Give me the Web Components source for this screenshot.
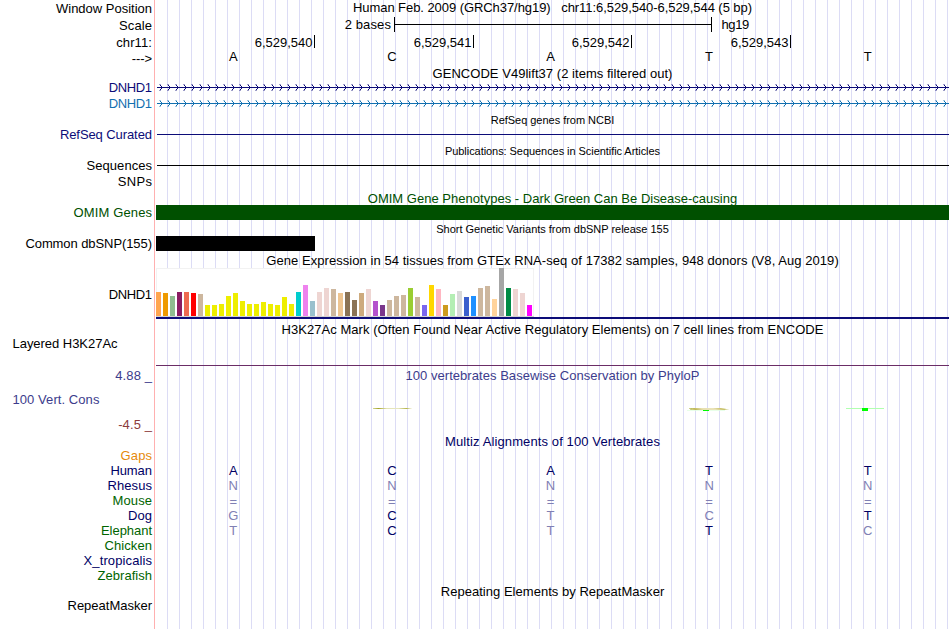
<!DOCTYPE html>
<html lang="en">
<head>
<meta charset="utf-8">
<title>Genome browser tracks</title>
<style>
body { margin: 0; background: #fff; }
</style>
</head>
<body>
<genome-view></genome-view>
<script>
/* Text run whose advance is spread to the given width. */
class FitText extends HTMLElement {
  connectedCallback() {
    const s = this.attachShadow({ mode: 'open' });
    s.innerHTML = '<style>:host{display:block;white-space:pre;line-height:15px}span{display:inline-block}</style><span><slot></slot></span>';
    const w = +this.getAttribute('w');
    if (w) {
      const span = s.querySelector('span');
      const d = (w - span.getBoundingClientRect().width) / this.textContent.length;
      span.style.letterSpacing = d.toFixed(3) + 'px';
      span.style.marginRight = (-d).toFixed(3) + 'px';
    }
  }
}
customElements.define('fit-text', FitText);

/* One browser row: label column on the left, data area on the right. */
class TrackRow extends HTMLElement {
  connectedCallback() {
    const s = this.attachShadow({ mode: 'open' });
    const a = n => this.getAttribute(n);
    s.innerHTML = `<style>
      :host{display:grid;grid-template-columns:152px 793px;column-gap:4px;height:${a('h')}px;color:${a('c') || '#000'}}
      .l{display:flex;justify-content:${a('left') ? 'flex-start' : 'flex-end'};padding:${a('lt') || 0}px 0 0 ${a('left') || 0}px;min-width:0;height:0}
      .t{display:flex;justify-content:center;padding-top:${a('tt') || 0}px;height:0;font-size:${a('fs') || 13}px}
      .d{min-width:0;height:${a('h')}px}
    </style>
    <div class="l">${a('label') ? '' : '<slot name="label"></slot>'}</div>
    <div class="d">${a('t') ? '<div class="t"></div>' : ''}<slot></slot></div>`;
    const put = (sel, text, w) => {
      if (!text) return;
      const el = document.createElement('fit-text');
      el.setAttribute('w', w);
      el.textContent = text;
      s.querySelector(sel).append(el);
    };
    put('.l', a('label'), a('lw'));
    put('.t', a('t'), a('tw'));
  }
}
customElements.define('track-row', TrackRow);

/* Five bases in equal columns; a dash after a letter dims it. */
class BaseCells extends HTMLElement {
  connectedCallback() {
    const s = this.attachShadow({ mode: 'open' });
    s.innerHTML = `<style>:host{display:grid;grid-template-columns:repeat(5,158.6px);margin-left:-2px;text-align:center;line-height:15px}
      .dim{color:#8080b4}.eq{padding-top:1px}</style>` + this.getAttribute('v').split(' ').map(v =>
      `<span class="${v[1] ? 'dim' : ''} ${v[0] === '=' ? 'eq' : ''}">${v[0]}</span>`).join('');
  }
}
customElements.define('base-cells', BaseCells);

/* Ruler line with a tick at both ends. */
class ScaleBar extends HTMLElement {
  connectedCallback() {
    this.attachShadow({ mode: 'open' }).innerHTML = `<style>
      :host{display:grid;grid-template-columns:235px 321px 1fr}
      .a{display:flex;justify-content:flex-end}
      .a,.b{height:15px}.b{padding-left:9.5px}
      svg{display:block;margin-left:3px}</style>
      <div class="a"><fit-text w="46.5">2 bases</fit-text></div>
      <svg width="318" height="15" shape-rendering="crispEdges"><path d="M0 0h1v15h-1zM317 0h1v15h-1zM0 7h318v1H0z"/></svg>
      <div class="b"><fit-text w="27.5">hg19</fit-text></div>`;
  }
}
customElements.define('scale-bar', ScaleBar);

class CoordTicks extends HTMLElement {
  connectedCallback() {
    this.attachShadow({ mode: 'open' }).innerHTML = `<style>
      :host{display:grid;grid-template-columns:159px 159px 158px 159px}
      div{display:flex;justify-content:flex-end;gap:1.5px;padding-top:1px}
      i{width:1px;height:13px;background:#000}</style>` +
      [0, 1, 2, 3].map(n => `<div><fit-text w="57.7">6,529,54${n}</fit-text><i></i></div>`).join('');
  }
}
customElements.define('coord-ticks', CoordTicks);

/* Intron line with strand arrows. */
class GeneLine extends HTMLElement {
  connectedCallback() {
    const n = [], f = [];
    for (let x = 5; x < 792; x += 8) {
      n.push(`M${x - 1} 5h1v1h-1zM${x} 6h1v1h-1zM${x + 1} 7h1v1h-1zM${x} 8h1v1h-1zM${x - 1} 9h1v1h-1z`);
      f.push(`M${x - 2} 4h1v1h-1zM${x - 2} 10h1v1h-1zM${x - 1} 4h1v1h-1zM${x - 1} 10h1v1h-1z`);
    }
    this.attachShadow({ mode: 'open' }).innerHTML = `<style>:host{display:block}svg{display:block}</style>
      <svg width="793" height="16" shape-rendering="crispEdges" fill="currentColor"><path d="M1 7h792v1H1z"/><path d="${n.join('')}"/><path opacity=".4" d="${f.join('')}"/></svg>`;
  }
}
customElements.define('gene-line', GeneLine);

/* Solid block: x, y, w, h inside the data area. */
class DataBlock extends HTMLElement {
  connectedCallback() {
    const a = n => this.getAttribute(n) || 0;
    this.attachShadow({ mode: 'open' }).innerHTML = `<style>:host{display:block;padding:${a('y')}px 0 0 ${a('x')}px}
      div{width:${a('w')}px;height:${a('h')}px;background:${a('c')}}</style><div></div>`;
  }
}
customElements.define('data-block', DataBlock);

/* Tissue expression bars, 5px wide on a 7px pitch. */
class TissueBars extends HTMLElement {
  connectedCallback() {
    const v = [
      [24,'#ffa54f'],[23,'#ee9a00'],[20,'#8fbc8f'],[24,'#8b1c62'],[24,'#ee6a50'],[23,'#ff0000'],[22,'#cdb79e'],
      [11,'#eeee00'],[11,'#eeee00'],[12,'#eeee00'],[20,'#eeee00'],[23,'#eeee00'],[15,'#eeee00'],[12,'#eeee00'],[12,'#eeee00'],[14,'#eeee00'],[12,'#eeee00'],[11,'#eeee00'],[19,'#eeee00'],[12,'#eeee00'],
      [24,'#00cdcd'],[31,'#ee82ee'],[15,'#9ac0cd'],[24,'#eed5d2'],[28,'#eed5d2'],[27,'#cdb79e'],[23,'#eec591'],[24,'#8b7355'],[16,'#8b7355'],[23,'#cdaa7d'],[27,'#eed5d2'],
      [15,'#b452cd'],[11,'#7a378b'],[16,'#cdb79e'],[20,'#cdb79e'],[21,'#cdb79e'],[28,'#9acd32'],[19,'#cdb79e'],[11,'#7a67ee'],[31,'#ffd700'],[27,'#ffb6c1'],[11,'#cd9b1d'],[22,'#b4eeb4'],[25,'#d9d9d9'],
      [19,'#3a5fcd'],[20,'#1e90ff'],[28,'#cdb79e'],[30,'#cdb79e'],[17,'#ffd39b'],[48,'#a6a6a6'],[28,'#008b45'],[27,'#eed5d2'],[23,'#eed5d2'],[11,'#ff00ff']];
    this.attachShadow({ mode: 'open' }).innerHTML = `<style>
      :host{display:block}
      .p{box-sizing:border-box;width:378px;height:49px;background:linear-gradient(#f2f2f2,#f2f2f2) 0 0/100% 1px no-repeat,linear-gradient(#f2f2f2,#f2f2f2) 0 0/1px 100% no-repeat,linear-gradient(#f2f2f2,#f2f2f2) 100% 0/1px 100% no-repeat,#fff;border-bottom:1px solid #d2d2d2;display:flex;gap:2px;align-items:flex-end}
      i{width:5px;flex:none}
      .n{height:2px;background:#0c0c78}</style>
      <div class="p">${v.map(([h, c]) => `<i style="height:${h}px;background:${c}"></i>`).join('')}</div><div class="n"></div>`;
  }
}
customElements.define('tissue-bars', TissueBars);

/* Conservation scores: faint squashed letters around the zero line. */
class PhyloWiggle extends HTMLElement {
  connectedCallback() {
    this.attachShadow({ mode: 'open' }).innerHTML = `<style>:host{display:block}svg{display:block}</style>
    <svg width="793" height="68"><defs>
      <linearGradient id="o"><stop offset="0" stop-color="#a5ad2c" stop-opacity=".5"/><stop offset=".14" stop-color="#a5a52c"/><stop offset=".35" stop-color="#e3e3b4"/><stop offset=".65" stop-color="#e6e6c0"/><stop offset=".86" stop-color="#b5b54c"/><stop offset="1" stop-color="#c5c56c" stop-opacity=".1"/></linearGradient></defs>
      <g transform="translate(0 0)">
      <rect x="217" y="42" width="39" height="1" fill="url(#o)"/>
      <rect x="533" y="42" width="37" height="1" fill="url(#o)"/>
      <rect x="534" y="43" width="39" height="1" fill="url(#o)"/>
      <rect x="536" y="42" width="32" height="2" fill="#f1ddb0" opacity=".35"/>
      <rect x="531" y="44" width="38" height="1" fill="#dfffdf" opacity=".7"/>
      <rect x="547" y="44" width="6" height="1" fill="#00f800"/>
      <rect x="690" y="42" width="38" height="1" fill="#b0ffb0"/>
      <rect x="706" y="42" width="6" height="3" fill="#00ff00"/></g></svg>`;
  }
}
customElements.define('phylo-wiggle', PhyloWiggle);

class GenomeView extends HTMLElement {
  connectedCallback() {
    this.attachShadow({ mode: 'open' }).innerHTML = `<style>
      :host{display:block;width:950px;height:629px;overflow:hidden;font:13px "Liberation Sans",Arial,sans-serif;color:#000;
        background:linear-gradient(#ffb0b0,#ffb0b0) 154px 0/1px 100% no-repeat,
        repeating-linear-gradient(90deg,#dcdcf5 0 1px,transparent 1px 12px) 167px 0/783px 100% no-repeat,#fff}
      .v{width:152px}
      .v div{display:flex;justify-content:flex-end}
      phylo-wiggle{margin-top:-1px}
    </style>
    <track-row h="17" label="Window Position" lw="96" lt="1" t="Human Feb. 2009 (GRCh37/hg19)   chr11:6,529,540-6,529,544 (5 bp)" tw="399"></track-row>
    <track-row h="17" label="Scale" lw="33" lt="1"><scale-bar></scale-bar></track-row>
    <track-row h="15" label="chr11:" lw="36" lt="1"><coord-ticks></coord-ticks></track-row>
    <track-row h="17" label="--->" lw="20" lt="2"><base-cells v="A C A T T"></base-cells></track-row>
    <track-row h="14" t="GENCODE V49lift37 (2 items filtered out)" tw="240"></track-row>
    <track-row h="16" label="DNHD1" lw="43" c="#0c0c78"><gene-line></gene-line></track-row>
    <track-row h="16" label="DNHD1" lw="43" c="#1270b0"><gene-line></gene-line></track-row>
    <track-row h="15" t="RefSeq genes from NCBI" tw="123.5" tt="1" fs="11"></track-row>
    <track-row h="16" label="RefSeq Curated" lw="92" c="#0c0c78"><data-block x="1" y="7" w="792" h="1" c="#0c0c78"></data-block></track-row>
    <track-row h="15" t="Publications: Sequences in Scientific Articles" tw="215" tt="1" fs="11"></track-row>
    <track-row h="16" label="Sequences" lw="65.5"><data-block x="1" y="7" w="792" h="1" c="#000"></data-block></track-row>
    <track-row h="16" label="SNPs" lw="34.5"></track-row>
    <track-row h="15" t="OMIM Gene Phenotypes - Dark Green Can Be Disease-causing" tw="369.5" tt="1" c="#005000"></track-row>
    <track-row h="15" label="OMIM Genes" lw="78.5" c="#005000"><data-block w="793" h="15" c="#005000" style="position:relative"></data-block></track-row>
    <track-row h="16" t="Short Genetic Variants from dbSNP release 155" tw="232.5" tt="2" fs="11"></track-row>
    <track-row h="15" label="Common dbSNP(155)" lw="126.5"><data-block w="159" h="15" c="#000"></data-block></track-row>
    <track-row h="17" t="Gene Expression in 54 tissues from GTEx RNA-seq of 17382 samples, 948 donors (V8, Aug 2019)" tw="572.5" tt="2"></track-row>
    <track-row h="51" label="DNHD1" lw="43" lt="19"><tissue-bars></tissue-bars></track-row>
    <track-row h="17" t="H3K27Ac Mark (Often Found Near Active Regulatory Elements) on 7 cell lines from ENCODE" tw="542" tt="3"></track-row>
    <track-row h="30" label="Layered H3K27Ac" lw="105" left="12.5"><data-block y="29" w="793" h="1" c="#6b2d66"></data-block></track-row>
    <track-row h="68" t="100 vertebrates Basewise Conservation by PhyloP" tw="294" tt="2" c="#3c3c8c">
      <div slot="label" class="v"><div style="margin-top:2px"><fit-text w="37">4.88 _</fit-text></div>
      <div style="justify-content:flex-start;padding-left:12.5px;margin-top:9px"><fit-text w="87">100 Vert. Cons</fit-text></div>
      <div style="margin-top:10px;color:#8c3c3c"><fit-text w="34">-4.5 _</fit-text></div></div>
      <phylo-wiggle style="margin-top:-2px"></phylo-wiggle></track-row>
    <track-row h="14" t="Multiz Alignments of 100 Vertebrates" tw="215" c="#000064"></track-row>
    <track-row h="15" label="Gaps" lw="31.5" c="#e68a0c"></track-row>
    <track-row h="15" label="Human" lw="41.5" c="#000064"><base-cells v="A C A T T"></base-cells></track-row>
    <track-row h="15" label="Rhesus" lw="44.5" c="#000064"><base-cells v="N- N- N- N- N-"></base-cells></track-row>
    <track-row h="15" label="Mouse" lw="39.5" c="#006400"><base-cells v="=- =- =- =- =-"></base-cells></track-row>
    <track-row h="15" label="Dog" lw="24" c="#000064"><base-cells v="G- C T- C- T"></base-cells></track-row>
    <track-row h="15" label="Elephant" lw="51" c="#006400"><base-cells v="T- C T- T C-" style="color:#000064"></base-cells></track-row>
    <track-row h="15" label="Chicken" lw="47.5" c="#006400"></track-row>
    <track-row h="15" label="X_tropicalis" lw="68.5" c="#000064"></track-row>
    <track-row h="15" label="Zebrafish" lw="54.5" c="#006400"></track-row>
    <track-row h="15" t="Repeating Elements by RepeatMasker" tw="223.5" tt="1"></track-row>
    <track-row h="31" label="RepeatMasker" lw="84.5"></track-row>`;
  }
}
customElements.define('genome-view', GenomeView);
</script>
</body>
</html>
